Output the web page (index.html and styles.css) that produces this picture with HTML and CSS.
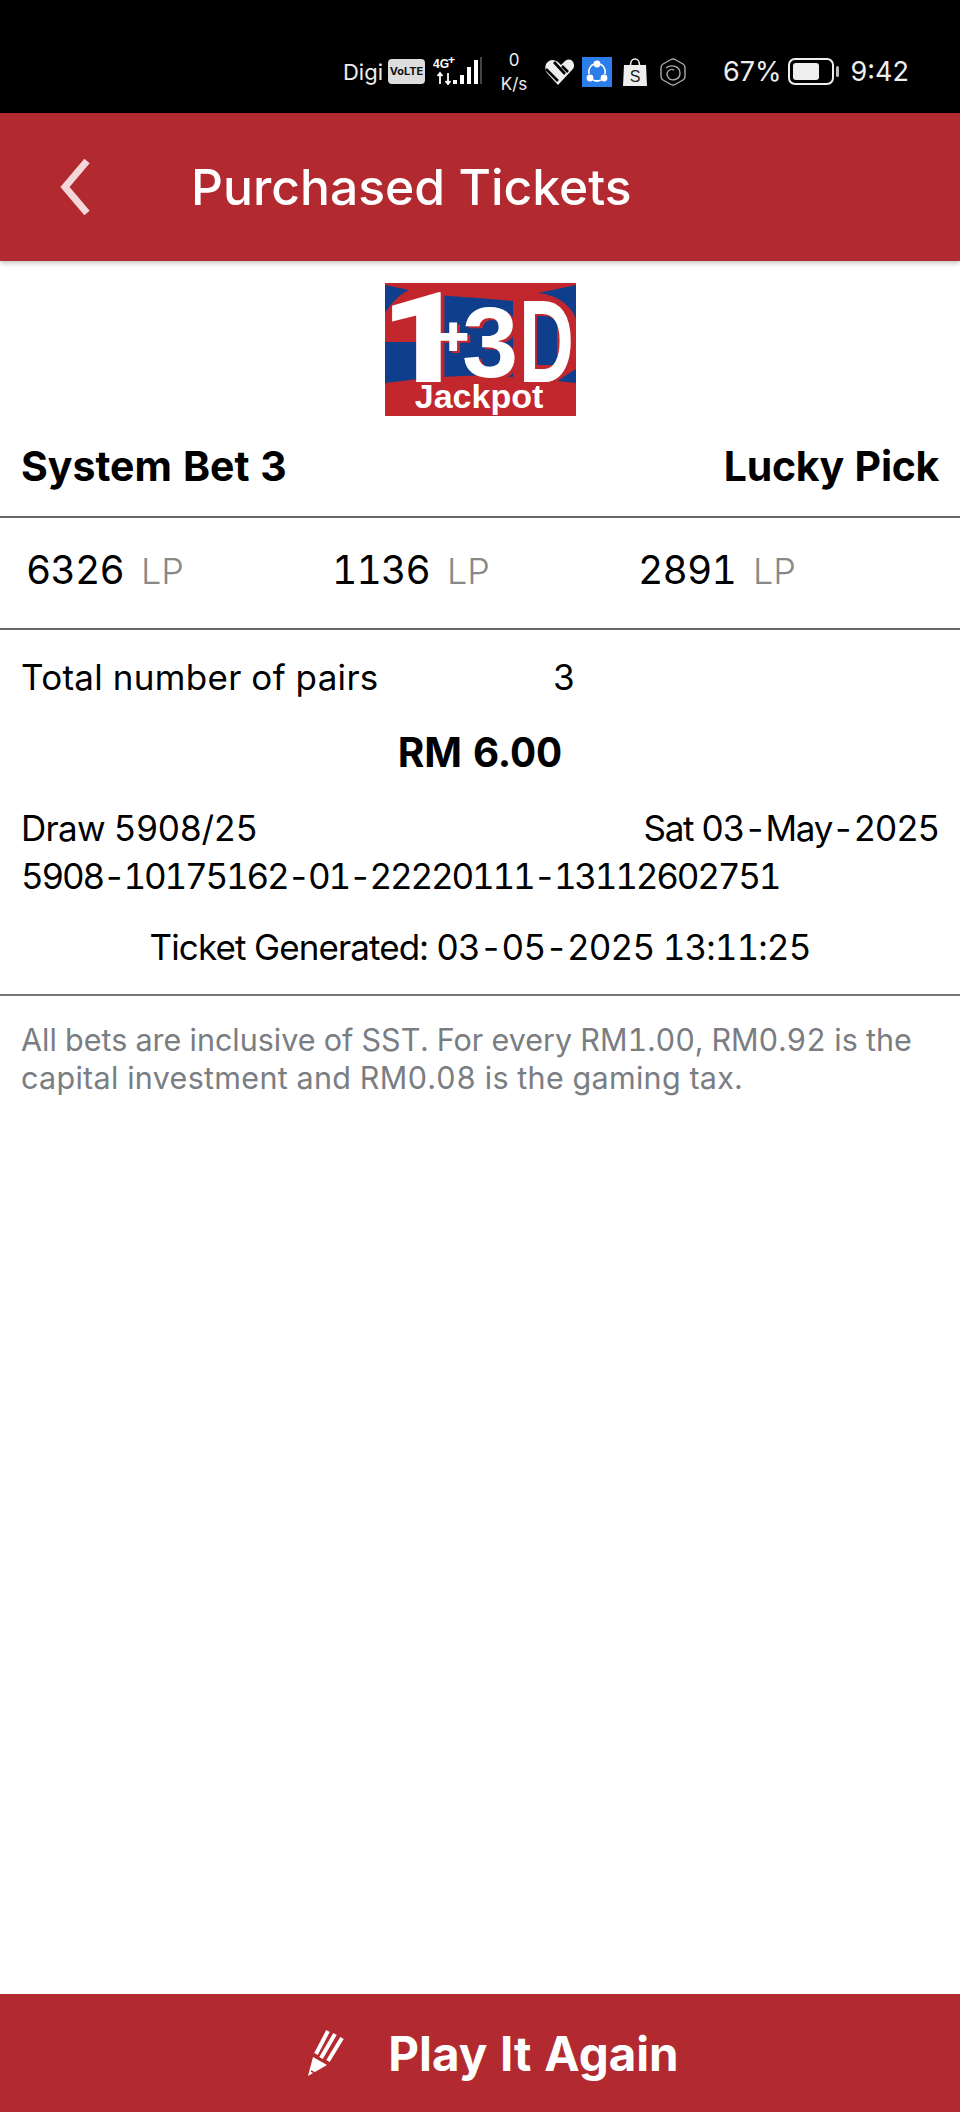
FILE: index.html
```html
<!DOCTYPE html>
<html lang="en">
<head>
  <meta charset="UTF-8" />
  <meta name="viewport" content="width=device-width, initial-scale=1.0"/>
  <title>Purchased Tickets</title>
  <link rel="stylesheet" href="styles.css">
</head>
<body>
  <div class="page">
    <div class="status-bar">
      <span class="carrier">Digi</span>
      <span class="volte">VoLTE</span>
      <svg class="signal" width="49" height="30" viewBox="0 0 49 30">
        <text x="0" y="11" class="signal-text">4G</text>
        <text x="15" y="7" class="signal-plus">+</text>
        <path d="M7 16v11M4.500 19 7 16l2.500 3M15 16v11M12.500 24l2.500 3 2.500-3" stroke="#fff" stroke-width="1.800" fill="none"/>
        <rect x="20" y="23" width="4" height="4" fill="#fff"/>
        <rect x="27" y="18" width="4" height="9" fill="#fff"/>
        <rect x="34" y="10" width="4" height="17" fill="#fff"/>
        <rect x="41" y="3" width="4" height="24" fill="#fff"/>
        <rect x="47" y="0" width="2" height="27" fill="#444"/>
      </svg>
      <div class="speed"><span>0</span><span>K/s</span></div>
      <svg class="ic-heart" width="29" height="27" viewBox="0 0 29 27">
        <path d="M13 27 2 15C-1 11 0 5 4 3c3-2 6-1 9 1l3 3 4-4c3-2 6-2 8 1 2 3 1 6-1 8z" fill="#eee"/>
        <path d="M1 11l12 12M9 4l11 12M17 8l6 6" stroke="#000" stroke-width="2.600" fill="none"/>
      </svg>
      <svg class="ic-share" width="30" height="30" viewBox="0 0 30 30">
        <rect width="30" height="30" fill="#2b7de9"/>
        <path d="M7 17a9 9 0 0 1 5-10M23 17a9 9 0 0 0-5-10M11 23a9 9 0 0 0 8 0" fill="none" stroke="#fff" stroke-width="1.800"/>
        <circle cx="15" cy="7" r="3.400" fill="#fff"/>
        <circle cx="8" cy="21" r="3.400" fill="#fff"/>
        <circle cx="22" cy="21" r="3.400" fill="#fff"/>
      </svg>
      <svg class="ic-bag" width="24" height="28" viewBox="0 0 24 28">
        <path d="M1 7h22l1 21H0z" fill="#eee"/>
        <path d="M7.500 7c0-8 9-8 9 0" fill="none" stroke="#eee" stroke-width="1.600"/>
        <text x="12" y="24" class="bag-text">S</text>
      </svg>
      <svg class="ic-hex" width="26" height="28" viewBox="0 0 26 28">
        <path d="M11 1.500a4 4 0 0 1 4 0l8 4.500a4 4 0 0 1 2 3.500v9a4 4 0 0 1-2 3.500l-8 4.500a4 4 0 0 1-4 0l-8-4.500a4 4 0 0 1-2-3.500v-9a4 4 0 0 1 2-3.500z" fill="none" stroke="#aaa" stroke-width="1.400"/>
        <path d="M6 10c5-4 14-2 14 5s-9 9-12 4 2-9 6-7" fill="none" stroke="#aaa" stroke-width="1.400"/>
      </svg>
      <span class="battery-text">67%</span>
      <svg class="battery" width="51" height="27" viewBox="0 0 51 27">
        <rect x="1" y="1" width="44" height="25" rx="6" fill="none" stroke="#eee" stroke-width="2"/>
        <rect x="5" y="5" width="26" height="17" rx="3" fill="#eee"/>
        <rect x="48" y="8" width="3" height="11" rx="1.500" fill="#bbb"/>
      </svg>
      <span class="clock">9:42</span>
    </div>

    <div class="header">
      <svg class="back" width="30" height="56" viewBox="0 0 30 56">
        <path d="M27 2 5 28l22 26" fill="none" stroke="#f4d7d9" stroke-width="7"/>
      </svg>
      <h1>Purchased Tickets</h1>
    </div>

    <div class="logo-wrap">
      <svg class="logo" width="191" height="133" viewBox="0 0 191 133">
        <rect width="191" height="133" fill="#c1272d"/>
        <path d="M0 2 24 7C14 12 6 20 0 30z" fill="#0f3f8c"/>
        <path d="M0 59H51V12C80 14 105 16 128 18V94C90 91 50 93 0 100z" fill="#0f3f8c"/>
        <rect x="144" y="32" width="28" height="50" fill="#0f3f8c"/>
        <path d="M153 10 191 2V36C186 22 172 12 153 10z" fill="#0f3f8c"/>
        <path d="M191 86V100L172 98z" fill="#0f3f8c"/>
        <text class="logo-big" transform="translate(-5 99) scale(1.170 1)">1</text>
        <text class="logo-three" transform="translate(77 94)">3</text>
        <text class="logo-d" transform="translate(134 99) scale(.650 1)">D</text>
        <text class="logo-plus" x="53" y="71">+</text>
        <text class="logo-jackpot" x="94" y="125">Jackpot</text>
      </svg>
    </div>

    <div class="bet-row">
      <span>System Bet 3</span>
      <span class="pick">Lucky Pick</span>
    </div>

    <div class="numbers">
      <div class="num"><span class="digits">6326</span><span class="lp">LP</span></div>
      <div class="num"><span class="digits">1136</span><span class="lp">LP</span></div>
      <div class="num"><span class="digits">2891</span><span class="lp">LP</span></div>
    </div>

    <div class="details">
      <div class="pairs"><span class="pairs-label">Total number of pairs</span><span>3</span></div>
      <div class="amount">RM 6.00</div>
      <div class="draw-row"><span class="draw-no">Draw 5908/25</span><span class="draw-date">Sat 03-May-2025</span></div>
      <div class="ticket-no">5908-10175162-01-22220111-13112602751</div>
      <div class="generated">Ticket Generated: 03-05-2025 13:11:25</div>
    </div>

    <p class="note">All bets are inclusive of SST. For every RM1.00, RM0.92 is the <span class="note-end">capital investment and RM0.08 is the gaming tax.</span></p>

    <div class="play-again">
      <svg class="pencil" width="36" height="47" viewBox="0 0 36 47">
        <path d="M0 46 5 27 19 35z" fill="#fff"/>
        <path d="M3 41 9 44" stroke="#b22a30" stroke-width="1.500"/>
        <path d="M8 24 20 1M13 28 27 4M20 31 34 8" stroke="#fff" stroke-width="4" fill="none"/>
      </svg>
      <span>Play It Again</span>
    </div>
  </div>
</body>
</html>
```

FILE: styles.css
```css
* { box-sizing: border-box; }
body {
  margin: 0;
  background: #fff;
  font-family: "Inter", "Noto Sans", sans-serif;
  font-variant-numeric: tabular-nums;
  color: #000;
}
.page {
  width: 960px;
  height: 2112px;
  display: flex;
  flex-direction: column;
  overflow: hidden;
}

.status-bar {
  height: 113px;
  flex: none;
  background: #000;
  color: #eee;
  display: flex;
  justify-content: flex-end;
  align-items: center;
  padding: 30px 51px 0 0;
  font-size: 27px;
  font-variant-numeric: normal;
}
.carrier { font-size: 22px; margin-right: 5px; }
.volte {
  width: 37px;
  height: 25px;
  background: #ddd;
  color: #111;
  border-radius: 4px;
  font-size: 11px;
  font-weight: 700;
  text-align: center;
  line-height: 25px;
  margin-right: 8px;
}
.signal { margin-right: 16px; }
.signal-text, .signal-plus { font-family: "Liberation Sans", sans-serif; font-weight: 700; fill: #fff; font-size: 12px; }
.speed {
  width: 32px;
  display: flex;
  flex-direction: column;
  align-items: center;
  font-size: 17px;
  line-height: 24px;
  margin-right: 15px;
}
.ic-heart { margin-right: 8px; }
.ic-share { margin-right: 11px; }
.ic-bag { margin-right: 13px; }
.ic-hex { margin-right: 37px; }
.bag-text { font-family: "Liberation Sans", sans-serif; font-size: 16px; fill: #222; text-anchor: middle; }
.battery-text { margin-right: 6px; }
.battery { margin-right: 12px; }

.header {
  height: 148px;
  flex: none;
  background: #b22a30;
  display: flex;
  align-items: center;
  padding-left: 60px;
  box-shadow: 0 2px 5px rgba(0,0,0,0.25);
}
.header h1 {
  margin: 0 0 0 101px;
  color: #fff;
  font-size: 49.8px;
  font-weight: 500;
}

.logo-wrap {
  height: 133px;
  margin-top: 22px;
  display: flex;
  justify-content: center;
}
.logo-three, .logo-d, .logo-plus, .logo-jackpot {
  font-family: "Liberation Sans", sans-serif;
  font-weight: 700;
  fill: #fff;
}
.logo-big, .logo-three, .logo-d, .logo-plus { filter: drop-shadow(3px 2px 0 #c1272d); }
.logo-big { font-family: "Roboto", sans-serif; font-weight: 900; font-size: 127px; font-variant-numeric: normal; fill: #fff; }
.logo-three { font-size: 101px; }
.logo-d { font-size: 117px; }
.logo-plus { font-size: 52px; stroke: #fff; stroke-width: 2px; }
.logo-jackpot { font-size: 34px; text-anchor: middle; }

.bet-row {
  height: 102px;
  padding: 0 21px;
  display: flex;
  justify-content: space-between;
  align-items: center;
  font-size: 41px;
  font-weight: 700;
  border-bottom: 2px solid #666;
}
.pick { letter-spacing: -0.3px; }
.numbers {
  height: 112px;
  padding: 0 0 8px 26px;
  display: flex;
  align-items: center;
  border-bottom: 2px solid #666;
}
.num { width: 306px; display: flex; align-items: baseline; }
.digits { font-size: 39px; letter-spacing: -0.8px; }
.lp { font-size: 36px; font-weight: 300; color: #888; margin-left: 17px; }

.details {
  padding: 0 21px;
  font-size: 35px;
  border-bottom: 2px solid #777;
  height: 366px;
}
.pairs { display: flex; padding-top: 26px; line-height: 42px; }
.pairs-label { width: 532px; letter-spacing: 0.3px; }
.amount { text-align: center; font-size: 40.5px; font-weight: 700; margin-top: 30px; line-height: 50px; }
.draw-row { display: flex; justify-content: space-between; margin-top: 27px; line-height: 46px; }
.draw-no { letter-spacing: -0.7px; }
.draw-date { letter-spacing: -1.3px; }
.ticket-no { line-height: 50px; letter-spacing: -2.2px; }
.generated { text-align: center; margin-top: 23px; line-height: 46px; letter-spacing: -0.9px; }

.note {
  margin: 0;
  padding: 25px 21px 0;
  font-size: 30.5px;
  line-height: 38px;
  color: #7a7d82;
}
.note-end { letter-spacing: 0.3px; }

.play-again {
  margin-top: auto;
  height: 118px;
  flex: none;
  background: #b22a30;
  color: #fff;
  display: flex;
  justify-content: center;
  align-items: center;
  gap: 44px;
  padding-left: 27px;
  font-size: 47.5px;
  font-weight: 700;
}
```
